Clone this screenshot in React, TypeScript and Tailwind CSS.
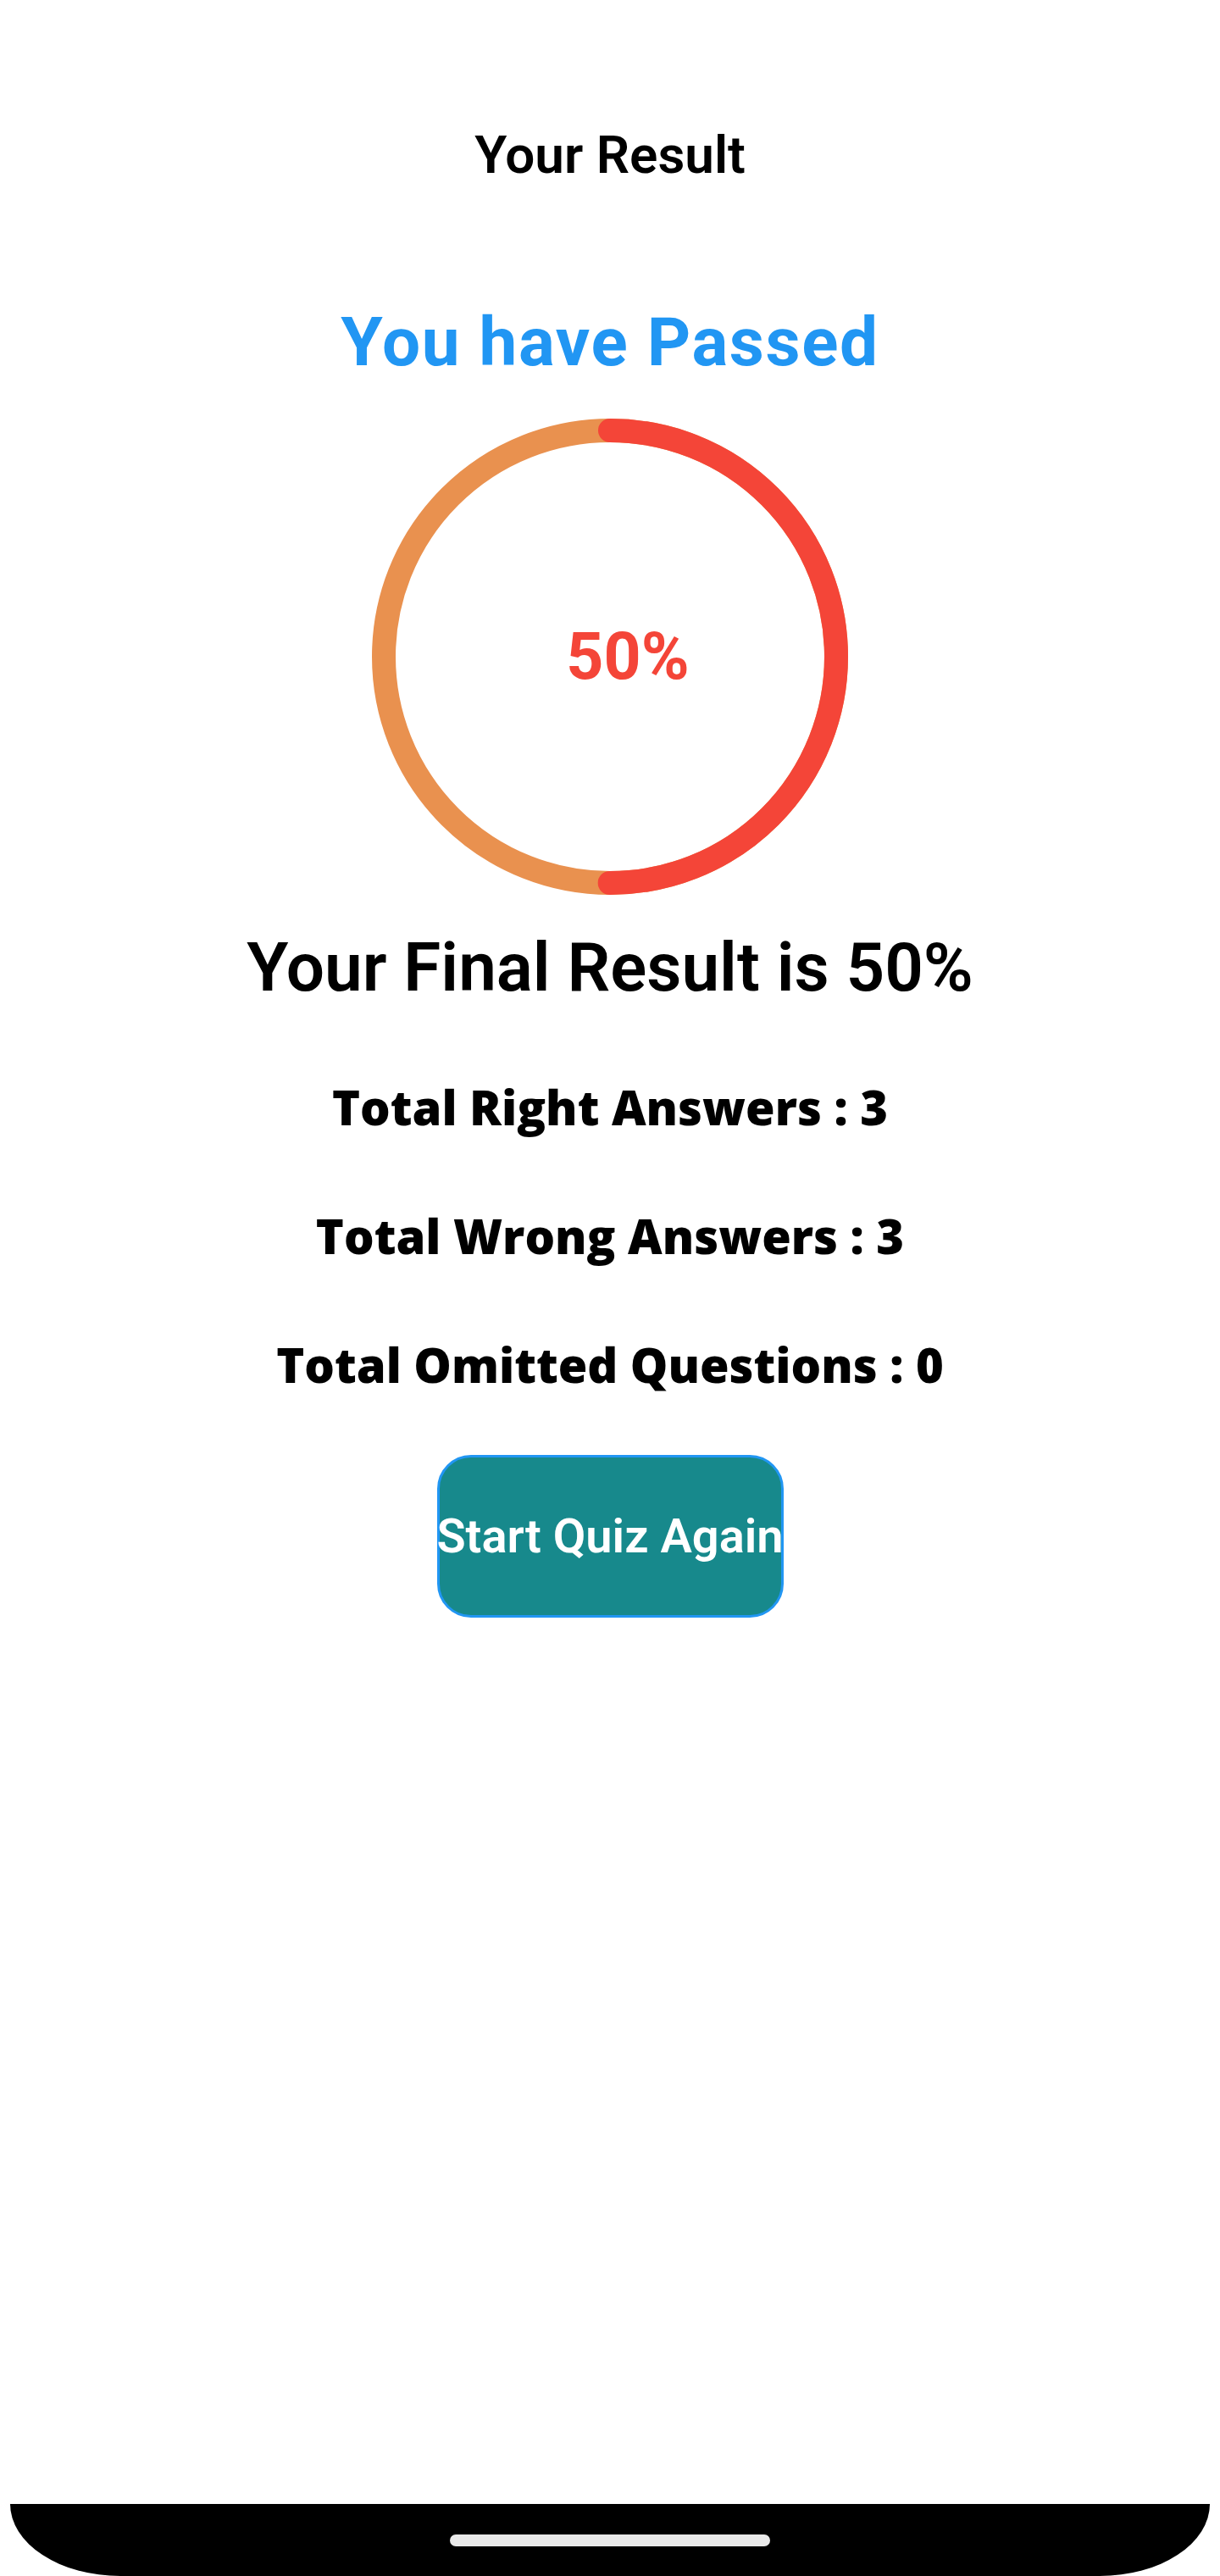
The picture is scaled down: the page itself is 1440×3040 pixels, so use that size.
import React from 'react'

type StatProps = {
  label: string
  value: number
}

const StatRow = ({ label, value }: StatProps) => {
  return (
    <div className="h-[80px] leading-[80px] text-[56px] font-extrabold text-black whitespace-nowrap font-['Open_Sans',sans-serif]">
      {label} : {value}
    </div>
  )
}

const ResultRing = ({ percent }: { percent: number }) => {
  const size = 562
  const stroke = 28
  const r = (size - stroke) / 2
  const c = 2 * Math.PI * r
  return (
    <div className="relative w-[562px] h-[562px]">
      <svg width={size} height={size} viewBox={`0 0 ${size} ${size}`}>
        <circle cx={size / 2} cy={size / 2} r={r} fill="none" stroke="#E9914F" strokeWidth={stroke} />
        <circle
          cx={size / 2}
          cy={size / 2}
          r={r}
          fill="none"
          stroke="#F44538"
          strokeWidth={stroke}
          strokeLinecap="round"
          strokeDasharray={`${(c * percent) / 100} ${c}`}
          transform={`rotate(-90 ${size / 2} ${size / 2})`}
        />
      </svg>
      <div className="absolute inset-0 flex items-center justify-center pl-[42px]">
        <span className="text-[77px] font-bold text-[#F44538] leading-none">{percent}%</span>
      </div>
    </div>
  )
}

export default function App() {
  const percent = 50

  return (
    <div className="w-[1440px] h-[3040px] bg-white flex flex-col items-center font-['Roboto',sans-serif]">
      <div className="mt-[143px] h-[80px] leading-[80px] text-[62px] font-semibold text-black">
        Your Result
      </div>

      <div className="mt-[131px] h-[100px] leading-[100px] text-[80px] font-bold text-[#2196F3] tracking-[0.02em]">
        You have Passed
      </div>

      <div className="mt-[40px]">
        <ResultRing percent={percent} />
      </div>

      <div className="mt-[36px] h-[100px] leading-[100px] text-[80px] font-semibold text-black whitespace-nowrap">
        Your Final Result is {percent}%
      </div>

      <div className="mt-[74px] flex flex-col items-center gap-[72px]">
        <StatRow label="Total Right Answers" value={3} />
        <StatRow label="Total Wrong Answers" value={3} />
        <StatRow label="Total Omitted Questions" value={0} />
      </div>

      <button className="mt-[67px] w-[409px] h-[192px] rounded-[40px] border-[3px] border-[#2196F3] bg-[#17898C] flex items-center justify-center">
        <span className="text-[56px] font-semibold text-white whitespace-nowrap leading-none">Start Quiz Again</span>
      </button>

      {/* phone nav bar */}
      <div className="mt-auto w-[1416px] h-[85px] bg-black rounded-bl-[130px_85px] rounded-br-[130px_85px] flex justify-center">
        <div className="mt-[36px] w-[378px] h-[14px] rounded-full bg-[#E9E9E9]" />
      </div>
    </div>
  )
}
